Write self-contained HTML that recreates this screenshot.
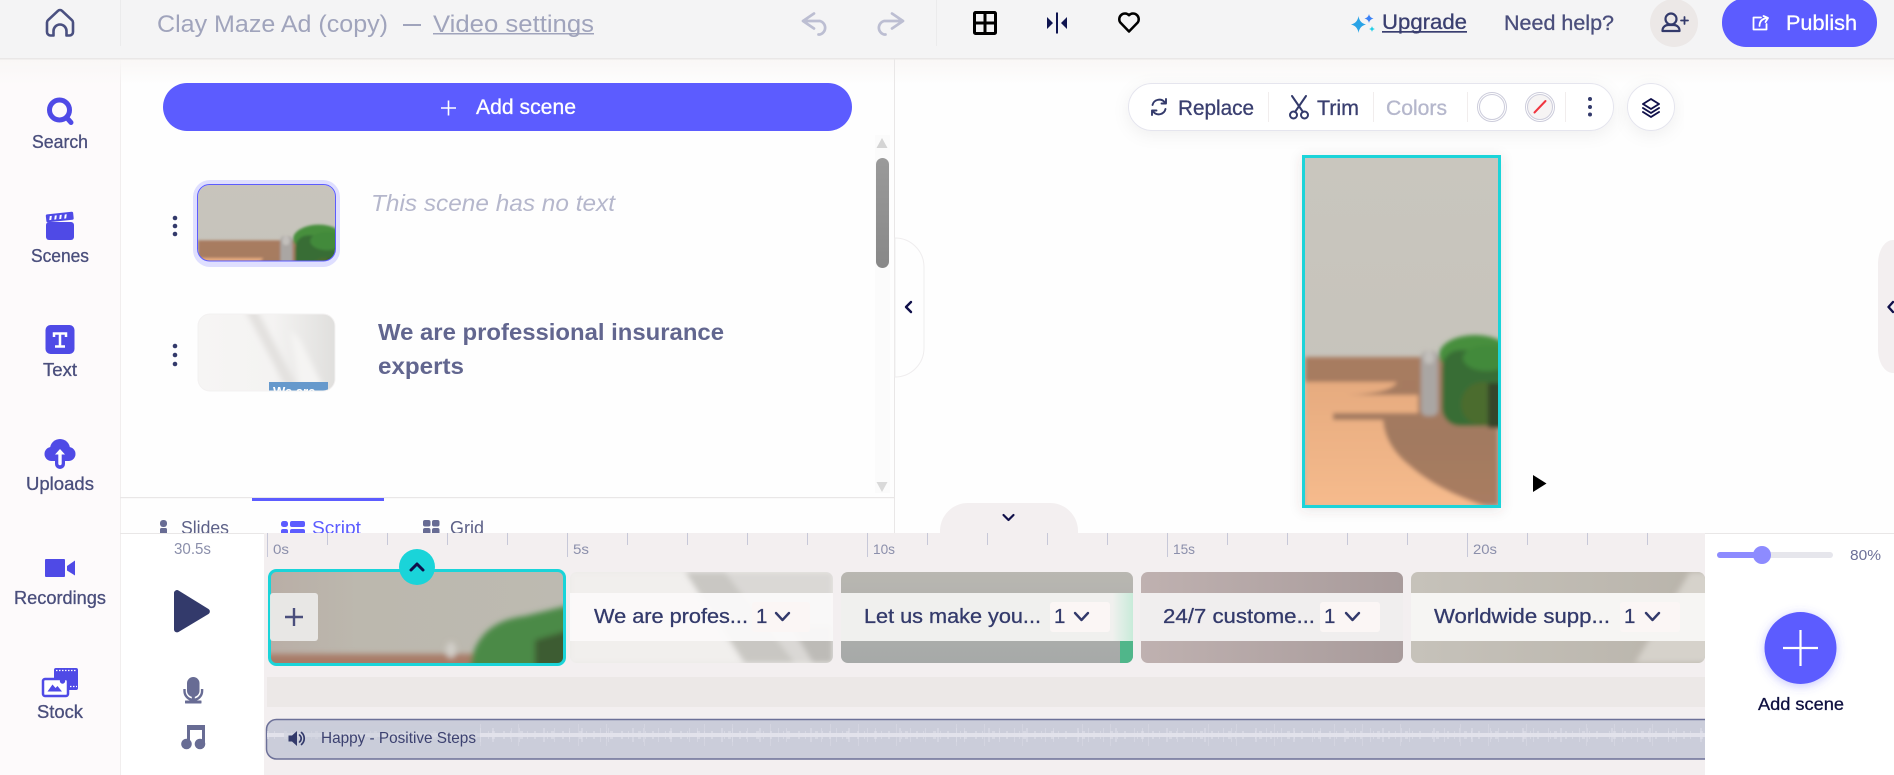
<!DOCTYPE html>
<html lang="en">
<head>
<meta charset="utf-8">
<title>Clay Maze Ad (copy)</title>
<style>
html,body{margin:0;padding:0;width:1894px;height:775px;overflow:hidden;background:#fff}
svg{display:block;position:absolute;left:0;top:0}
text{font-family:"Liberation Sans",sans-serif;white-space:pre}
.m{stroke:currentColor;stroke-width:.3}
.nav{font-size:18.500px;fill:#4a4e7c;color:#4a4e7c}
.rul{font-size:14px;fill:#8b8fab}
.clip{font-size:20.500px;fill:#333a6b;color:#333a6b}
.ic{fill:none;stroke-linecap:round;stroke-linejoin:round}
</style>
</head>
<body>
<svg width="1894" height="775" viewBox="0 0 1894 775" xmlns="http://www.w3.org/2000/svg">
<defs>
<linearGradient id="topfade" x1="0" y1="0" x2="0" y2="1"><stop offset="0" stop-color="#f9f7f6"/><stop offset="1" stop-color="#f9f7f6" stop-opacity="0"/></linearGradient>
<linearGradient id="wall" x1="0" y1="0" x2="0" y2="1"><stop offset="0" stop-color="#c9c6be"/><stop offset=".7" stop-color="#c6c3bb"/><stop offset="1" stop-color="#b3b1a9"/></linearGradient>
<linearGradient id="wall1" x1="0" y1="0" x2="1" y2="0"><stop offset="0" stop-color="#b9aea6"/><stop offset=".3" stop-color="#bcb8ae"/><stop offset="1" stop-color="#bdbab1"/></linearGradient>
<linearGradient id="lightfloor" x1="0" y1="0" x2="0" y2="1"><stop offset="0" stop-color="#e6ab7f"/><stop offset="1" stop-color="#f6bb8d"/></linearGradient>
<linearGradient id="darkfloor" x1="0" y1="0" x2="0" y2="1"><stop offset="0" stop-color="#a87b61"/><stop offset=".55" stop-color="#a27a60"/><stop offset="1" stop-color="#a97c62"/></linearGradient>
<linearGradient id="scroll" x1="0" y1="0" x2="0" y2="1"><stop offset="0" stop-color="#9a9a9a"/><stop offset="1" stop-color="#888"/></linearGradient>
<linearGradient id="s2" x1="0" y1="0" x2="1" y2="0"><stop offset="0" stop-color="#f6f5f4"/><stop offset=".55" stop-color="#f4f3f2"/><stop offset="1" stop-color="#e0dfdd"/></linearGradient>
<linearGradient id="c3" x1="0" y1="0" x2="0" y2="1"><stop offset="0" stop-color="#b9b7b1"/><stop offset="1" stop-color="#a6a9a8"/></linearGradient>
<linearGradient id="c4" x1="0" y1="0" x2="1" y2="0"><stop offset="0" stop-color="#bfb1b0"/><stop offset="1" stop-color="#a89b9b"/></linearGradient>
<linearGradient id="c5" x1="0" y1="0" x2="1" y2="0"><stop offset="0" stop-color="#c6c2ba"/><stop offset="1" stop-color="#b9b4ab"/></linearGradient>
<linearGradient id="band3" x1="0" y1="0" x2="1" y2="0"><stop offset=".93" stop-color="#f0f0ee"/><stop offset="1" stop-color="#c8ebd9"/></linearGradient>
<filter id="b15" x="-5%" y="-5%" width="110%" height="110%"><feGaussianBlur stdDeviation="2"/></filter>
<filter id="b3" x="-20%" y="-20%" width="140%" height="140%"><feGaussianBlur stdDeviation="3"/></filter>
<filter id="sh" x="-20%" y="-40%" width="140%" height="200%"><feDropShadow dx="0" dy="4" stdDeviation="8" flood-color="#000" flood-opacity=".06"/></filter>
<filter id="shf" x="-20%" y="-20%" width="140%" height="140%"><feDropShadow dx="0" dy="2" stdDeviation="6" flood-color="#5a4a3a" flood-opacity=".14"/></filter>
<filter id="glow" x="-40%" y="-40%" width="180%" height="180%"><feDropShadow dx="0" dy="2" stdDeviation="5" flood-color="#5c5cff" flood-opacity=".35"/></filter>
<clipPath id="cf"><rect x="1305" y="158" width="193" height="347"/></clipPath>
<clipPath id="cth1"><rect x="198" y="185" width="137" height="76" rx="12"/></clipPath>
<clipPath id="cth2"><rect x="198" y="314" width="137" height="77" rx="12"/></clipPath>
<clipPath id="ccl1"><rect x="270" y="571" width="294" height="93" rx="6"/></clipPath>
<clipPath id="ccl2"><rect x="570" y="572" width="263" height="91" rx="7"/></clipPath>
<clipPath id="ccl3"><rect x="841" y="572" width="292" height="91" rx="7"/></clipPath>
<clipPath id="ccl5"><rect x="1411" y="572" width="294" height="91" rx="7"/></clipPath>
<clipPath id="cmus"><rect x="267" y="720" width="1438" height="38"/></clipPath>
<g id="scene">
<rect width="193" height="347" fill="url(#wall)"/>
<g filter="url(#b15)">
<rect y="199" width="193" height="148" fill="url(#darkfloor)"/>
<path d="M0 224H92C88 232 70 236 42 237H113V255H28V262H78C80 282 90 296 105 308C130 330 158 340 182 349H0Z" fill="url(#lightfloor)"/>
<rect x="116" y="193" width="17" height="65" rx="6" fill="#aaa6a3"/>
<rect x="119" y="193" width="10" height="13" rx="5" fill="#c2bfbb"/>
<ellipse cx="170" cy="197" rx="36" ry="20" fill="#478f3c"/>
<rect x="137" y="192" width="60" height="76" rx="18" fill="#376d36"/>
<ellipse cx="182" cy="200" rx="24" ry="13" fill="#438a3a"/>
<circle cx="178" cy="246" r="22" fill="#4c6c2e"/>
<rect x="183" y="225" width="14" height="45" fill="#35452a"/>
</g>
</g>
</defs>

<!-- base -->
<rect width="1894" height="775" fill="#fefefe"/>
<rect x="0" y="59" width="120" height="716" fill="#fdfafb"/>
<rect x="120" y="59" width="1" height="716" fill="#f1eeee"/>
<rect x="0" y="59" width="1894" height="26" fill="url(#topfade)"/>

<!-- top bar -->
<rect width="1894" height="58" fill="#f4f4f5"/>
<rect y="58" width="1894" height="1.500" fill="#e9e7e7"/>
<rect x="120" y="0" width="1" height="46" fill="#ebebec"/>
<rect x="936" y="0" width="1" height="46" fill="#ebebec"/>
<path class="ic" stroke="#4a5080" stroke-width="2.600" d="M53.500 35.500H50.500a3.500 3.500 0 0 1-3.500-3.500V22.500a3 3 0 0 1 1-2.300L58 10.800a3 3 0 0 1 4 0l10 9.400a3 3 0 0 1 1 2.300V32a3.500 3.500 0 0 1-3.500 3.500H66.500V31a6.500 6.500 0 0 0-13 0Z"/>
<text x="157" y="32" font-size="24" textLength="231" lengthAdjust="spacingAndGlyphs" fill="#a0a4bc">Clay Maze Ad (copy)</text>
<rect x="403" y="24" width="18" height="2" fill="#a0a4bc"/>
<text x="433" y="32" font-size="24" textLength="161" lengthAdjust="spacingAndGlyphs" fill="#a0a4bc">Video settings</text>
<rect x="433" y="33" width="161" height="1.500" fill="#a0a4bc"/>
<path class="ic" stroke="#bcbed2" stroke-width="2.700" d="M814 13.500L803 21l11 7.500M803 21h17a7 7 0 0 1 0 13.500h-1.500"/>
<path class="ic" stroke="#bcbed2" stroke-width="2.700" d="M892 13.500L903 21l-11 7.500M903 21H884a7 7 0 0 0 0 13.500h1.500"/>
<g fill="none" stroke="#000" stroke-width="3"><rect x="974.500" y="12.500" width="21" height="21" rx="1"/><path d="M985 12v22M974 23h22"/></g>
<path fill="#0f1550" d="M1056 12.500h2v21h-2zM1047 17l6 6-6 6zM1067 17l-6 6 6 6z"/>
<path fill="none" stroke="#000" stroke-width="2.500" stroke-linejoin="round" d="M1129 31.500l-8.700-9a5.700 5.700 0 0 1 8.700-7.300a5.700 5.700 0 0 1 8.700 7.300z"/>
<path fill="#29a3e6" d="M1358.500 16Q1359.500 23 1366 24.500Q1359.500 26 1358.500 33Q1357.500 26 1351 24.500Q1357.500 23 1358.500 16Z"/>
<path fill="#3b82f6" d="M1369 14Q1369.600 17.500 1373.500 18.500Q1369.600 19.500 1369 23Q1368.400 19.500 1364.500 18.500Q1368.400 17.500 1369 14Z"/>
<path fill="#22cfe6" d="M1372 26Q1372.400 28.600 1375 29Q1372.400 29.400 1372 32Q1371.600 29.400 1369 29Q1371.600 28.600 1372 26Z"/>
<text x="1382" y="29" font-size="21" textLength="85" lengthAdjust="spacingAndGlyphs" class="m" fill="#3a3f70" color="#3a3f70">Upgrade</text>
<rect x="1382" y="31" width="85" height="1.700" fill="#3a3f70"/>
<text x="1504" y="30" font-size="21" textLength="110" lengthAdjust="spacingAndGlyphs" class="m" fill="#4a4e7c" color="#4a4e7c">Need help?</text>
<circle cx="1674" cy="23" r="24" fill="#ece8e7"/>
<g class="ic" stroke="#333a6b" stroke-width="2.200"><circle cx="1671" cy="19" r="5.500"/><path d="M1662.500 31v-.5a5.500 5.500 0 0 1 5.500-5.500h6a5.500 5.500 0 0 1 5.500 5.500v.5z"/><path d="M1681 20.500h7M1684.500 17v7" stroke-width="1.800"/></g>
<rect x="1722" y="-2" width="155" height="49" rx="24" fill="#5c5cff"/>
<path class="ic" stroke="#fff" stroke-width="1.800" d="M1761 17.500h-7.500v12h13V24M1759.500 26c0-5 3-7.500 8-8M1763.500 16l4.500 2-2.500 4"/>
<text x="1786" y="30" font-size="21" textLength="71" lengthAdjust="spacingAndGlyphs" class="m" fill="#fff" color="#fff">Publish</text>

<!-- sidebar -->
<g fill="#4f4ae6">
<g class="ic" stroke="#4f4ae6"><circle cx="59.500" cy="110" r="10" stroke-width="5"/><path d="M67.500 118.500l3.500 4" stroke-width="5"/></g>
<rect x="46" y="222" width="28" height="18" rx="3"/>
<g transform="rotate(-6 60 217)"><rect x="46" y="213" width="27.500" height="8" rx="1.500"/><path fill="#fff" d="M50 215h2l-1 4h-2zM55 215h2l-1 4h-2zM60 215h2l-1 4h-2zM65 215h2l-1 4h-2z"/></g>
<rect x="45.500" y="325" width="29" height="29" rx="5"/>
<path fill="none" stroke="#fff" stroke-width="2.500" d="M54 337v-3.500h12v3.500M60 333.500v13M55 346.500h10"/>
<circle cx="60" cy="449" r="10"/><circle cx="51.500" cy="454" r="7"/><circle cx="68.500" cy="454" r="7"/><rect x="51" y="450" width="18" height="11"/>
<rect x="55" y="455" width="10" height="14" rx="5"/>
<path fill="#fff" d="M60 449l-5 5.500h3.300v9a1.700 1.700 0 0 0 3.400 0v-9H65z"/>
<rect x="45" y="559" width="20" height="18" rx="1"/>
<path d="M67 566l8-5.500v15l-8-5z"/>
<rect x="54" y="668" width="24" height="22" rx="2"/>
<path fill="none" stroke="#fff" stroke-width="1.300" stroke-dasharray="1.500 1.500" d="M56 670.500H77M70 686.500H77"/>
<rect x="43" y="679" width="25" height="17" rx="2" fill="#fff" stroke="#4f4ae6" stroke-width="2.500"/>
<path d="M47.500 691.500l5-7 3 3.500 2-2 4.500 5.500z"/><circle cx="62.500" cy="681" r="2.700"/>
</g>
<text x="32" y="148" textLength="56" lengthAdjust="spacingAndGlyphs" class="nav m">Search</text>
<text x="31" y="262" textLength="58" lengthAdjust="spacingAndGlyphs" class="nav m">Scenes</text>
<text x="43" y="376" textLength="34" lengthAdjust="spacingAndGlyphs" class="nav m">Text</text>
<text x="26" y="490" textLength="68" lengthAdjust="spacingAndGlyphs" class="nav m">Uploads</text>
<text x="14" y="604" textLength="92" lengthAdjust="spacingAndGlyphs" class="nav m">Recordings</text>
<text x="37" y="718" textLength="46" lengthAdjust="spacingAndGlyphs" class="nav m">Stock</text>

<!-- scene panel -->
<rect x="894" y="59" width="1" height="475" fill="#e9e7e7"/>
<rect x="163" y="83" width="689" height="48" rx="24" fill="#5c5cff"/>
<path stroke="#fff" stroke-width="1.600" fill="none" d="M441 108h15M448.500 100.500v15"/>
<text x="476" y="114" font-size="21" textLength="100" lengthAdjust="spacingAndGlyphs" class="m" fill="#fff" color="#fff">Add scene</text>

<rect x="875" y="135" width="15" height="358" fill="#fbfbfb"/>
<path d="M882 138l5.500 10h-11z" fill="#d4d4d4"/>
<rect x="876" y="158" width="13" height="110" rx="6.500" fill="url(#scroll)"/>
<path d="M882 492l5.500-10h-11z" fill="#d9d9d9"/>

<g fill="#333a6b"><circle cx="175" cy="218" r="2.300"/><circle cx="175" cy="226" r="2.300"/><circle cx="175" cy="234" r="2.300"/>
<circle cx="175" cy="346" r="2.300"/><circle cx="175" cy="355" r="2.300"/><circle cx="175" cy="364" r="2.300"/></g>

<rect x="193" y="180" width="147" height="87" rx="17" fill="#dfdfff"/>
<g clip-path="url(#cth1)"><use href="#scene" transform="translate(198 99) scale(.71)"/></g>
<rect x="197.500" y="184.500" width="138" height="76.500" rx="12" fill="none" stroke="#5c5cff" stroke-width="1"/>
<text x="371" y="211" font-size="23" font-style="italic" textLength="244" lengthAdjust="spacingAndGlyphs" fill="#b5b7cc">This scene has no text</text>

<g clip-path="url(#cth2)">
<rect x="198" y="314" width="137" height="77" fill="url(#s2)"/>
<g filter="url(#b3)"><path d="M245 310L257 310 300 391 288 391Z" fill="#e3e1df"/><path d="M290 330L300 340 325 391 300 391Z" fill="#f5f4f3"/></g>
<rect x="269" y="382" width="59" height="9" fill="#6699cc"/>
<text x="273" y="396" font-size="13" font-weight="bold" fill="#fff">We are</text>
</g>
<rect x="198" y="314" width="137" height="77" rx="12" fill="none" stroke="#f3f1f1" stroke-width="1"/>
<text x="378" y="340" font-size="23" font-weight="bold" textLength="346" lengthAdjust="spacingAndGlyphs" fill="#62668f">We are professional insurance</text>
<text x="378" y="374" font-size="23" font-weight="bold" textLength="86" lengthAdjust="spacingAndGlyphs" fill="#62668f">experts</text>

<!-- tabs -->
<rect x="120" y="497" width="775" height="1.200" fill="#e9e7e7"/>
<rect x="252" y="498" width="132" height="3" fill="#5c5cff"/>
<g fill="#686c94"><rect x="160" y="520" width="7" height="7" rx="3"/><rect x="160" y="528" width="7" height="7" rx="1.500"/>
<rect x="423" y="520" width="7.500" height="6.500" rx="2"/><rect x="432" y="520" width="7.500" height="6.500" rx="2"/><rect x="423" y="528" width="7.500" height="7" rx="2"/><rect x="432" y="528" width="7.500" height="7" rx="2"/></g>
<g fill="#5c5cff"><rect x="281" y="521" width="7" height="6" rx="2.500"/><rect x="290" y="521" width="15" height="6" rx="2"/><rect x="281" y="529" width="7" height="6" rx="2"/><rect x="290" y="529" width="15" height="6" rx="2"/></g>
<text x="181" y="534" font-size="18.500" textLength="48" lengthAdjust="spacingAndGlyphs" fill="#5d6188">Slides</text>
<text x="312" y="534" font-size="18.500" textLength="49" lengthAdjust="spacingAndGlyphs" fill="#5c5cff">Script</text>
<text x="450" y="534" font-size="18.500" textLength="34" lengthAdjust="spacingAndGlyphs" fill="#5d6188">Grid</text>

<!-- preview -->
<rect x="1302" y="155" width="199" height="353" fill="#1ad4d9" filter="url(#shf)"/>
<g clip-path="url(#cf)"><use href="#scene" transform="translate(1305 158)"/></g>
<path d="M1533 475v17l13.500-8.500z" fill="#000"/>

<!-- toolbar -->
<rect x="1128.500" y="83.500" width="485" height="47" rx="23.500" fill="#fff" stroke="#e5e5ee" filter="url(#sh)"/>
<g fill="#f1eded"><rect x="1268" y="92" width="1" height="30"/><rect x="1373" y="92" width="1" height="30"/><rect x="1467" y="92" width="1" height="30"/><rect x="1565" y="92" width="1" height="30"/></g>
<path class="ic" stroke="#333a6b" stroke-width="1.900" d="M1152.500 105a7 7 0 0 1 12-3l1.500 1.500m0-4.500v4.500h-4.500M1165.500 109a7 7 0 0 1-12 3l-1.500-1.500m0 4.500v-4.500h4.500"/>
<text x="1178" y="115" font-size="21" textLength="76" lengthAdjust="spacingAndGlyphs" class="m" fill="#3a3f70" color="#3a3f70">Replace</text>
<g class="ic" stroke="#333a6b" stroke-width="2"><circle cx="1293.500" cy="115" r="3.500"/><circle cx="1304.500" cy="115" r="3.500"/><path d="M1292 96l11 16M1306 96l-11 16"/></g>
<text x="1317" y="115" font-size="21" textLength="42" lengthAdjust="spacingAndGlyphs" class="m" fill="#3a3f70" color="#3a3f70">Trim</text>
<text x="1386" y="115" font-size="21" textLength="61" lengthAdjust="spacingAndGlyphs" class="m" fill="#b5b7cc" color="#b5b7cc">Colors</text>
<g fill="none" stroke="#ccccdb" stroke-width="1"><circle cx="1492" cy="107" r="14.500"/><circle cx="1492" cy="107" r="12.500" fill="#fff"/><circle cx="1540" cy="107" r="14.500"/><circle cx="1540" cy="107" r="12.500" fill="#f6f4f4"/></g>
<path d="M1534.500 112.500l11-11.500" stroke="#f0353f" stroke-width="2" stroke-linecap="round"/>
<g fill="#333a6b"><circle cx="1590" cy="99" r="2"/><circle cx="1590" cy="107" r="2"/><circle cx="1590" cy="114.500" r="2"/></g>
<circle cx="1651" cy="107" r="23.500" fill="#fff" stroke="#e5e5ee" filter="url(#sh)"/>
<path class="ic" stroke="#10104a" stroke-width="1.900" d="M1651 99l8 5-8 5-8-5zM1643 108l8 5 8-5M1643 112l8 5 8-5"/>

<!-- collapse tabs -->
<path d="M895 238c16 0 29 13 29 29v81c0 16-13 29-29 29z" fill="#fefefe" stroke="#efedee"/>
<path class="ic" stroke="#10104a" stroke-width="2.400" d="M911 302l-5 5 5 5"/>
<path d="M1894 240h-1c-8 0-15 10-15 24v85c0 14 7 24 15 24h1z" fill="#f3eff0"/>
<path class="ic" stroke="#10104a" stroke-width="2.400" d="M1893 302l-4.500 5 4.500 5"/>
<path d="M940 534v-3c0-15 12-28 28-28h82c16 0 28 13 28 28v3z" fill="#f3eff0"/>
<path class="ic" stroke="#10104a" stroke-width="2.200" d="M1003.500 515l5 5 5-5"/>

<!-- bottom left -->
<rect x="120" y="533" width="144" height="242" fill="#fff"/>
<rect x="120" y="533" width="144" height="1" fill="#e9e7e7"/>
<rect x="120" y="534" width="1" height="241" fill="#f1eeee"/>
<text x="174" y="554" font-size="15.500" textLength="37" lengthAdjust="spacingAndGlyphs" fill="#8b8fab">30.5s</text>
<path d="M174 592.500v37a3 3 0 0 0 4.500 2.500l30-18a3 3 0 0 0 0-5l-30-18.500a3 3 0 0 0-4.500 2z" fill="#333a6b"/>
<g fill="#686c94"><rect x="187" y="677" width="12.500" height="20" rx="6.200"/><rect x="185" y="700.500" width="16.500" height="3" rx=".5"/><rect x="191.800" y="696" width="3" height="6"/></g>
<path fill="none" stroke="#686c94" stroke-width="2.400" d="M184.500 689v2a8.800 8.800 0 0 0 17.600 0v-2"/>
<g fill="#686c94"><path d="M187 725h18v19h-3v-14h-12v14h-3z"/><circle cx="186.500" cy="744" r="5.300"/><circle cx="200" cy="744" r="5.300"/></g>

<!-- timeline -->
<rect x="264" y="533" width="1441" height="242" fill="#f3eff0"/>
<g fill="none" stroke="#c7c8d8">
<path d="M267 539H1705" stroke-width="12" stroke-dasharray="1 59" />
<path d="M267 545H1705" stroke-width="24" stroke-dasharray="1 299" />
</g>
<text x="273" y="554" class="rul" textLength="16" lengthAdjust="spacingAndGlyphs">0s</text>
<text x="573" y="554" class="rul" textLength="16" lengthAdjust="spacingAndGlyphs">5s</text>
<text x="873" y="554" class="rul" textLength="22" lengthAdjust="spacingAndGlyphs">10s</text>
<text x="1173" y="554" class="rul" textLength="22" lengthAdjust="spacingAndGlyphs">15s</text>
<text x="1473" y="554" class="rul" textLength="24" lengthAdjust="spacingAndGlyphs">20s</text>

<!-- clip 2 -->
<g clip-path="url(#ccl2)">
<rect x="570" y="572" width="263" height="91" fill="#ebe9e7"/>
<g filter="url(#b3)"><path d="M570 572h115l55 91H570z" fill="#f1efed"/><path d="M685 572h40l70 91h-50z" fill="#c9c7c3"/><path d="M725 572h108v91h-38z" fill="#dad8d5"/><path d="M790 625l43 0v38h-20z" fill="#bdbbb7"/></g>
</g>
<rect x="570" y="593" width="263" height="48" fill="#fbfafa" fill-opacity=".94"/>
<rect x="752" y="602" width="58" height="30" rx="3" fill="#fbf6f5"/>
<text x="594" y="623" textLength="154" lengthAdjust="spacingAndGlyphs" class="clip m">We are profes...</text>
<text x="756" y="623" class="clip m">1</text>
<path class="ic" stroke="#333a6b" stroke-width="2.400" d="M776 613l6.500 7 6.500-7"/>

<!-- clip 3 -->
<g clip-path="url(#ccl3)">
<rect x="841" y="572" width="292" height="91" fill="url(#c3)"/>
<rect x="1120" y="640" width="13" height="23" fill="#50b68a"/>
</g>
<rect x="841" y="593" width="292" height="48" fill="url(#band3)"/>
<rect x="1050" y="602" width="60" height="30" rx="3" fill="#fbf6f5"/>
<text x="864" y="623" textLength="177" lengthAdjust="spacingAndGlyphs" class="clip m">Let us make you...</text>
<text x="1054" y="623" class="clip m">1</text>
<path class="ic" stroke="#333a6b" stroke-width="2.400" d="M1075 613l6.500 7 6.500-7"/>

<!-- clip 4 -->
<rect x="1141" y="572" width="262" height="91" rx="7" fill="url(#c4)"/>
<rect x="1140" y="593" width="263" height="48" fill="#f0eeee"/>
<rect x="1320" y="602" width="60" height="30" rx="3" fill="#fbf6f5"/>
<text x="1163" y="623" textLength="152" lengthAdjust="spacingAndGlyphs" class="clip m">24/7 custome...</text>
<text x="1324" y="623" class="clip m">1</text>
<path class="ic" stroke="#333a6b" stroke-width="2.400" d="M1346 613l6.500 7 6.500-7"/>

<!-- clip 5 -->
<g clip-path="url(#ccl5)">
<rect x="1411" y="572" width="294" height="91" fill="url(#c5)"/>
<g filter="url(#b3)"><path d="M1710 572h-20l-55 91h75z" fill="#d6d2cb"/></g>
</g>
<rect x="1411" y="593" width="294" height="48" fill="#f6f5f3"/>
<rect x="1620" y="602" width="60" height="30" rx="3" fill="#fbf6f5"/>
<text x="1434" y="623" textLength="176" lengthAdjust="spacingAndGlyphs" class="clip m">Worldwide supp...</text>
<text x="1624" y="623" class="clip m">1</text>
<path class="ic" stroke="#333a6b" stroke-width="2.400" d="M1646 613l6.500 7 6.500-7"/>

<!-- clip 1 -->
<g clip-path="url(#ccl1)">
<rect x="270" y="571" width="294" height="93" fill="url(#wall1)"/>
<g filter="url(#b3)">
<rect x="262" y="654" width="310" height="16" fill="#a87c67"/>
<ellipse cx="451" cy="650" rx="5" ry="8" fill="#d2cfc9"/>
<path d="M470 670C472 640 490 620 525 616L570 605V670Z" fill="#4b8a46"/>
<path d="M535 670V640L570 630V670Z" fill="#3d5c32"/>
</g>
</g>
<rect x="269.500" y="570.500" width="295" height="94" rx="7" fill="none" stroke="#1ad4d9" stroke-width="3"/>
<rect x="270" y="593" width="48" height="48" rx="3" fill="#ececea" fill-opacity=".92"/>
<path stroke="#4a4e7c" stroke-width="2.400" fill="none" d="M285 617h18M294 608v18"/>
<circle cx="417" cy="567" r="18" fill="#1ad4d9"/>
<path class="ic" stroke="#10104a" stroke-width="3" d="M411 570l6-6 6 6"/>

<!-- tracks -->
<rect x="267" y="677" width="1438" height="30" fill="#ece8e7"/>
<rect x="266.500" y="719.500" width="1460" height="39.500" rx="10" fill="#cbcdda" stroke="#6c7098" stroke-width="1.500"/>
<g clip-path="url(#cmus)" fill="none" stroke="#e2e2eb">
<path d="M267 735H1705" stroke-width="4"/>
<path d="M267 735H1705" stroke-width="8" stroke-dasharray="2 5 1 9 3 4 1 6 2 11 1 3 3 8" stroke-opacity=".55"/>
<path d="M480 735H1705" stroke-width="14" stroke-dasharray="1 11 2 17 1 7 1 23 2 9 1 14" stroke-opacity=".45"/>
<path d="M480 735H1705" stroke-width="22" stroke-dasharray="1 37 1 59 1 27" stroke-opacity=".35"/>
</g>
<rect x="284" y="726" width="196" height="26" fill="#cbcdda" fill-opacity=".55"/>
<path fill="#333a6b" d="M288.500 735.500h3.500l5-4.500v15l-5-4.500h-3.500z"/>
<path class="ic" stroke="#333a6b" stroke-width="1.700" d="M299.500 735a4.500 4.500 0 0 1 0 7M301.500 732.500a8 8 0 0 1 0 12"/>
<text x="321" y="743" font-size="16" textLength="155" lengthAdjust="spacingAndGlyphs" fill="#3c4170">Happy - Positive Steps</text>

<!-- right col -->
<rect x="1705" y="533" width="189" height="242" fill="#fff"/>
<rect x="1705" y="533" width="189" height="1" fill="#e9e7e7"/>
<rect x="1717" y="552" width="116" height="6" rx="3" fill="#e6e6ec"/>
<rect x="1717" y="552" width="45" height="6" rx="3" fill="#8d8bff"/>
<circle cx="1762" cy="555" r="9" fill="#8d8bff"/>
<text x="1850" y="560" font-size="14.500" textLength="31" lengthAdjust="spacingAndGlyphs" fill="#6c7098">80%</text>
<circle cx="1800.500" cy="648" r="36" fill="#5c5cff" filter="url(#glow)"/>
<path stroke="#fff" stroke-width="2.200" fill="none" d="M1783 648h35M1800.500 630v36"/>
<text x="1758" y="710" font-size="17.500" textLength="86" lengthAdjust="spacingAndGlyphs" class="m" fill="#0f1040" color="#0f1040">Add scene</text>
</svg>
</body>
</html>
